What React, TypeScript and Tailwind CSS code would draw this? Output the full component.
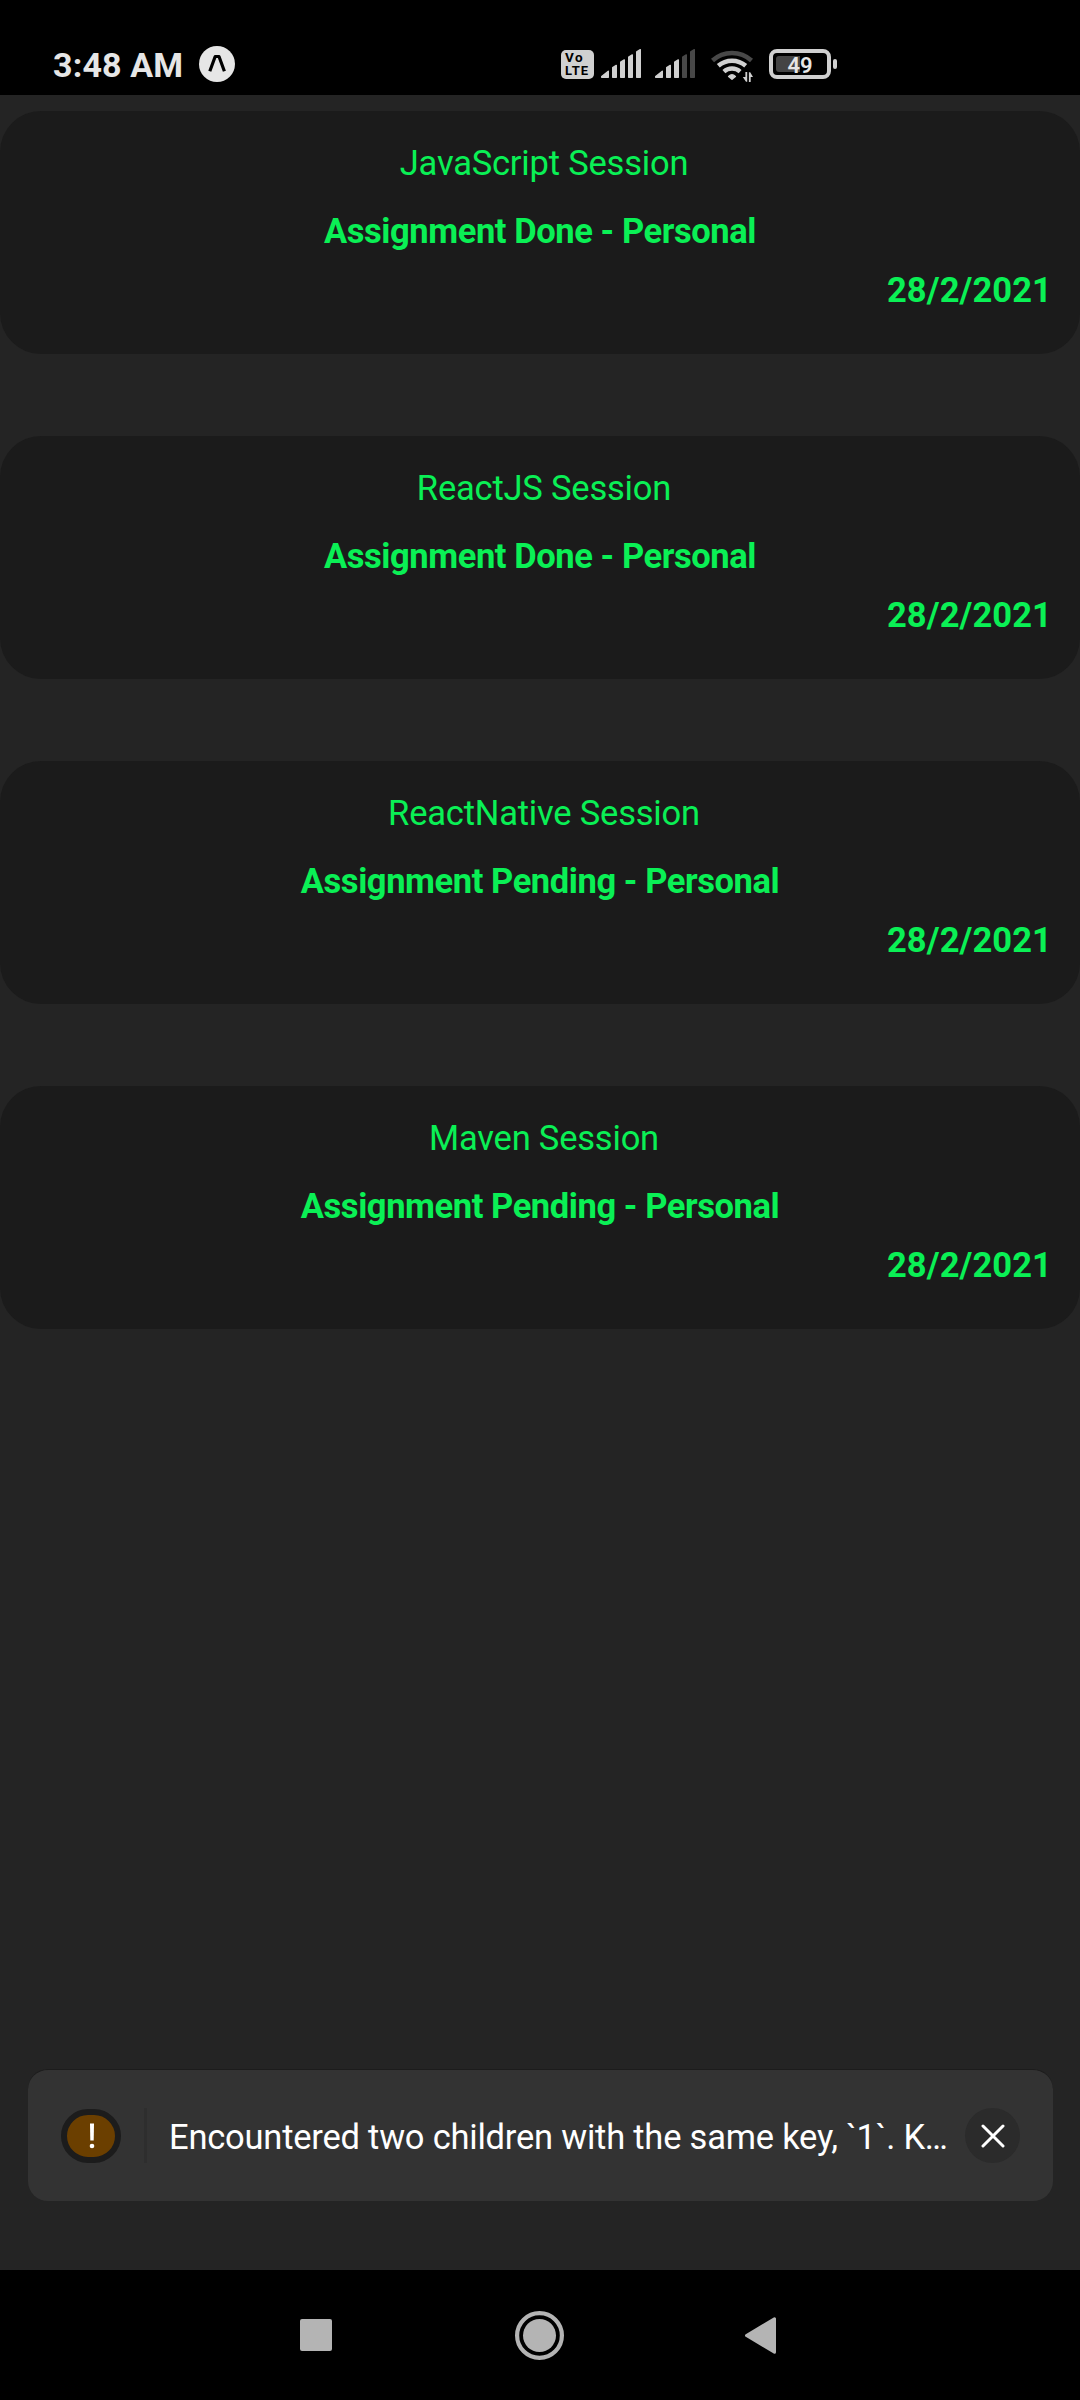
const sessions = [
  { title: "JavaScript Session", status: "Assignment Done - Personal", date: "28/2/2021" },
  { title: "ReactJS Session", status: "Assignment Done - Personal", date: "28/2/2021" },
  { title: "ReactNative Session", status: "Assignment Pending - Personal", date: "28/2/2021" },
  { title: "Maven Session", status: "Assignment Pending - Personal", date: "28/2/2021" },
];

function Signal({ strength }: { strength: number }) {
  const bars = [
    "M0.7 28.3 V27.5 L7.3 22.2 V28.3Z",
    "M11.7 28.3 V18.6 L15.3 16.4 V28.3Z",
    "M19.7 28.3 V13.1 L23.3 10.9 V28.3Z",
    "M27.7 28.3 V8.1 L31.3 5.9 V28.3Z",
    "M35.7 28.3 V2.9 L39.3 0.7 V28.3Z",
  ];
  return (
    <svg className="h-[29px] w-[40px]" viewBox="0 0 40 29" strokeWidth="1.4" strokeLinejoin="round">
      {bars.map((d, i) => {
        const color = i < strength ? "#d0d0d0" : "#484848";
        return <path key={d} d={d} fill={color} stroke={color} />;
      })}
    </svg>
  );
}

function StatusBar() {
  return (
    <header className="flex h-[95px] shrink-0 items-start bg-black pt-[46px] text-[#e6e6e6]">
      <div className="flex h-[36px] w-[561px] items-center pl-[53px]">
        <span className="w-[146px] whitespace-nowrap pt-[2px] text-[34px] leading-[40px] font-bold tracking-[0.15px]">3:48 AM</span>
        <svg className="size-[36px]" viewBox="0 0 36 36">
          <circle cx="18" cy="18" r="18" fill="#e6e6e6" />
          <path d="M10.8 25.2 L16.2 10.5 H20 L25.4 25.2" fill="none" stroke="#000" strokeWidth="3.2" strokeLinejoin="round" />
        </svg>
      </div>
      <div className="mt-[3px] flex items-start">
        <div className="mt-px flex h-[29px] w-[33px] flex-col items-start rounded-[5px] bg-[#d0d0d0] pt-[1px] pl-[4px] text-[13px] leading-[13px] font-bold text-black">
          <span className="text-[13.5px] tracking-[1.5px]">Vo</span>
          <span className="tracking-[1.1px]">LTE</span>
        </div>
        <div className="ml-[7px]"><Signal strength={5} /></div>
        <div className="ml-[14px]"><Signal strength={3} /></div>
        <svg className="ml-[16px] h-[34px] w-[44px]" viewBox="0 0 44 34" fill="none">
          <path d="M1.5 11.5 A29 29 0 0 1 40.5 11.5" stroke="#484848" strokeWidth="4.5" />
          <path d="M7.3 16.8 A21 21 0 0 1 34.7 16.8" stroke="#d0d0d0" strokeWidth="4.5" />
          <path d="M12.9 22.6 A12.5 12.5 0 0 1 29.1 22.6" stroke="#d0d0d0" strokeWidth="4.5" />
          <path d="M21 30.3 L17.6 27.4 Q21 24 24.4 27.4Z" fill="#d0d0d0" stroke="#d0d0d0" strokeWidth="1.4" strokeLinejoin="round" />
          <path d="M34.4 23 H36.2 V32.8 H35 L31.8 28 H34.4Z M37.9 33 V23.2 H39.2 L42 28 H39.7 V33Z" fill="#d0d0d0" />
        </svg>
        <div className="relative ml-[14px] flex h-[30px] w-[62px] items-center justify-center rounded-[8px] border-4 border-[#d0d0d0]">
          <div className="absolute top-[3px] left-[3px] h-[16px] w-[24px] rounded-l-[3px] bg-[#444]" />
          <span className="relative pt-[3px] text-[22px] leading-[22px] font-semibold">49</span>
        </div>
        <div className="mt-[10px] ml-[2px] h-[10px] w-[4px] rounded-[2px] bg-[#d0d0d0]" />
      </div>
    </header>
  );
}

function Toast() {
  return (
    <div className="mr-[27px] mb-[69px] ml-[28px] flex h-[132px] items-center rounded-[20px] border-t border-[#1c1c1c] bg-[#333] pt-px pr-[33px] pb-px pl-[33px] text-white">
      <div className="flex h-[54px] w-[60px] items-center justify-center rounded-[27px] border-[6px] border-[#1c1c1c] bg-[#6b3f00]">
        <svg className="ml-[2px] h-[26px] w-[6px]" viewBox="0 0 6 26">
          <path d="M1 0.5 H5 L4.7 17.5 H1.3Z" fill="#fff" />
          <circle cx="3" cy="23" r="2.3" fill="#fff" />
        </svg>
      </div>
      <div className="ml-[23px] h-[55px] w-[3px] bg-[#2e2e2e]" />
      <p className="ml-[22px] w-[780px] whitespace-nowrap pt-[2px] text-[34.5px] leading-[44px] tracking-[-0.22px]">
        Encountered two children with the same key, `1`. K…
      </p>
      <button className="ml-auto flex size-[55px] items-center justify-center rounded-full bg-[#2b2b2b]">
        <svg className="size-[24px]" viewBox="0 0 24 24">
          <path d="M2 2 L22 22 M22 2 L2 22" stroke="#fff" strokeWidth="3" strokeLinecap="round" />
        </svg>
      </button>
    </div>
  );
}

function NavBar() {
  return (
    <nav className="flex h-[130px] shrink-0 items-center bg-black pl-[300px]">
      <div className="size-[32px] rounded-[2px] bg-[#b4b4b4]" />
      <svg className="mt-px ml-[183px] size-[49px]" viewBox="0 0 49 49">
        <circle cx="24.5" cy="24.5" r="22.4" fill="none" stroke="#b4b4b4" strokeWidth="4.2" />
        <circle cx="24.5" cy="24.5" r="16.5" fill="#b4b4b4" />
      </svg>
      <svg className="mt-px ml-[181px] h-[37px] w-[31px]" viewBox="0 0 31 37">
        <path d="M1.5 18.5 L29.5 1.8 V35.2Z" fill="#b4b4b4" stroke="#b4b4b4" strokeWidth="3" strokeLinejoin="round" />
      </svg>
    </nav>
  );
}

export default function App() {
  return (
    <div className="flex h-[2400px] w-[1080px] flex-col overflow-hidden bg-[#242424] font-[Roboto,sans-serif]">
      <StatusBar />
      <main className="flex flex-1 flex-col pt-[16px]">
        <div className="flex flex-1 flex-col gap-[82px]">
          {sessions.map((s) => (
            <article
              key={s.title}
              className="h-[243px] rounded-[41px] bg-[#1b1b1b] pt-[30px] text-center text-[34.5px] leading-[44px] text-[#0af055]"
            >
              <h2 className="pl-[8px] tracking-[-0.2px]">{s.title}</h2>
              <p className="mt-[24px] font-bold tracking-[-0.42px]">{s.status}</p>
              <p className="mt-[15px] pr-[28px] text-right font-bold tracking-[0.1px]">{s.date}</p>
            </article>
          ))}
        </div>
        <Toast />
      </main>
      <NavBar />
    </div>
  );
}
